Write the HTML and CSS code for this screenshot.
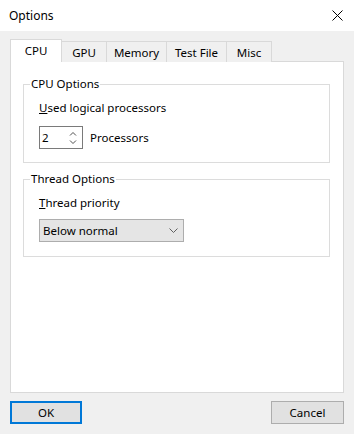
FILE: index.html
```html
<!DOCTYPE html>
<html lang="en">
<head>
    <meta charset="UTF-8">
    <meta name="viewport" content="width=device-width, initial-scale=1.0">
    <title>Options</title>
    <link rel="stylesheet" href="styles.css">
</head>
<body>
    <div class="window">
        <div class="titlebar">
            <span class="title">Options</span>
            <span class="close">
                <svg width="11" height="11" viewBox="0 0 11 11">
                    <path d="M0.5 0.5 L10.5 10.5 M10.5 0.5 L0.5 10.5" stroke="#000" stroke-width="1" fill="none"/>
                </svg>
            </span>
        </div>
        <div class="body">
            <div class="tabs">
                <div class="tab tab-cpu active">CPU</div>
                <div class="tab tab-gpu">GPU</div>
                <div class="tab tab-memory">Memory</div>
                <div class="tab tab-file">Test File</div>
                <div class="tab tab-misc">Misc</div>
            </div>
            <div class="panel">
                <fieldset class="group group-cpu">
                    <legend>CPU Options</legend>
                    <div class="field-label"><u>U</u>sed logical processors</div>
                    <div class="spin-row">
                        <div class="spinner">
                            <span class="spin-value">2</span>
                            <svg class="spin-arrows" width="8" height="14" viewBox="0 0 8 14">
                                <path d="M1 4.5 L4 1.5 L7 4.5 M1 9.5 L4 12.5 L7 9.5" stroke="#3c3c3c" stroke-width="0.9" fill="none"/>
                            </svg>
                        </div>
                        <span class="spin-unit">Processors</span>
                    </div>
                </fieldset>
                <fieldset class="group group-thread">
                    <legend>Thread Options</legend>
                    <div class="field-label"><u>T</u>hread priority</div>
                    <div class="combo">
                        <span>Below normal</span>
                        <svg class="combo-arrow" width="9" height="5" viewBox="0 0 9 5">
                            <path d="M0.5 0.5 L4.5 4.5 L8.5 0.5" stroke="#606060" stroke-width="1" fill="none"/>
                        </svg>
                    </div>
                </fieldset>
            </div>
            <div class="buttons">
                <button class="btn btn-default">OK</button>
                <button class="btn">Cancel</button>
            </div>
        </div>
    </div>
</body>
</html>
```

FILE: styles.css
```css
body {
    margin: 0;
    padding: 0;
    font-family: "Noto Sans", "Open Sans", sans-serif;
    font-size: 11.5px;
    color: #000;
    background-color: #f0f0f0;
}

.window {
    width: 354px;
    height: 434px;
    display: flex;
    flex-direction: column;
}

.titlebar {
    height: 31px;
    background-color: #fff;
    display: flex;
    align-items: center;
    justify-content: space-between;
    padding: 0 11px 0 9px;
    font-size: 12px;
}

.close {
    display: flex;
    align-items: center;
    margin-top: -1px;
}

.body {
    flex: 1;
    display: flex;
    flex-direction: column;
    padding: 8px 10px 0 10px;
    background-color: #f0f0f0;
}

.tabs {
    display: flex;
    align-items: flex-end;
    height: 23px;
    margin-bottom: -1px;
    position: relative;
    z-index: 1;
}

.tab {
    box-sizing: border-box;
    height: 21px;
    line-height: 21px;
    text-align: center;
    border: 1px solid #d9d9d9;
    border-bottom: none;
    margin-left: -1px;
    background-color: #f0f0f0;
}

.tab.active {
    height: 23px;
    line-height: 21px;
    margin-left: 0;
    background-color: #fff;
    position: relative;
    z-index: 2;
}

.tab-cpu { width: 52px; }
.tab-gpu { width: 46px; }
.tab-memory { width: 61px; }
.tab-file { width: 61px; }
.tab-misc { width: 46px; }

.panel {
    box-sizing: border-box;
    height: 332px;
    background-color: #fff;
    border: 1px solid #d9d9d9;
    padding: 14px 13px 0 12px;
}

.group {
    margin: 0;
    padding: 0 0 13px 0;
    border: 1px solid #dcdcdc;
    min-width: 0;
}

.group legend {
    margin-left: 6px;
    padding: 0 1px;
    line-height: 16px;
}

.group-thread {
    margin-top: 8px;
    padding-bottom: 14px;
}

.field-label {
    margin: 8px 0 0 15px;
    line-height: 16px;
}

.spin-row {
    display: flex;
    align-items: center;
    margin: 10px 0 0 15px;
}

.spinner {
    box-sizing: border-box;
    width: 44px;
    height: 23px;
    border: 1px solid #7a7a7a;
    display: flex;
    align-items: center;
    justify-content: space-between;
    padding: 0 5px 0 2px;
}

.spin-unit {
    margin-left: 7px;
}

.combo {
    box-sizing: border-box;
    width: 145px;
    height: 23px;
    margin: 8px 0 0 15px;
    background-color: #e5e5e5;
    border: 1px solid #adadad;
    display: flex;
    align-items: center;
    justify-content: space-between;
    padding: 0 5px 0 3px;
}

.buttons {
    display: flex;
    justify-content: space-between;
    margin-top: 8px;
}

.btn {
    box-sizing: border-box;
    height: 23px;
    width: 73px;
    font-family: inherit;
    font-size: inherit;
    color: #000;
    background-color: #e1e1e1;
    border: 1px solid #adadad;
    padding: 0;
}

.btn-default {
    width: 72px;
    border: 2px solid #0078d7;
}
```
